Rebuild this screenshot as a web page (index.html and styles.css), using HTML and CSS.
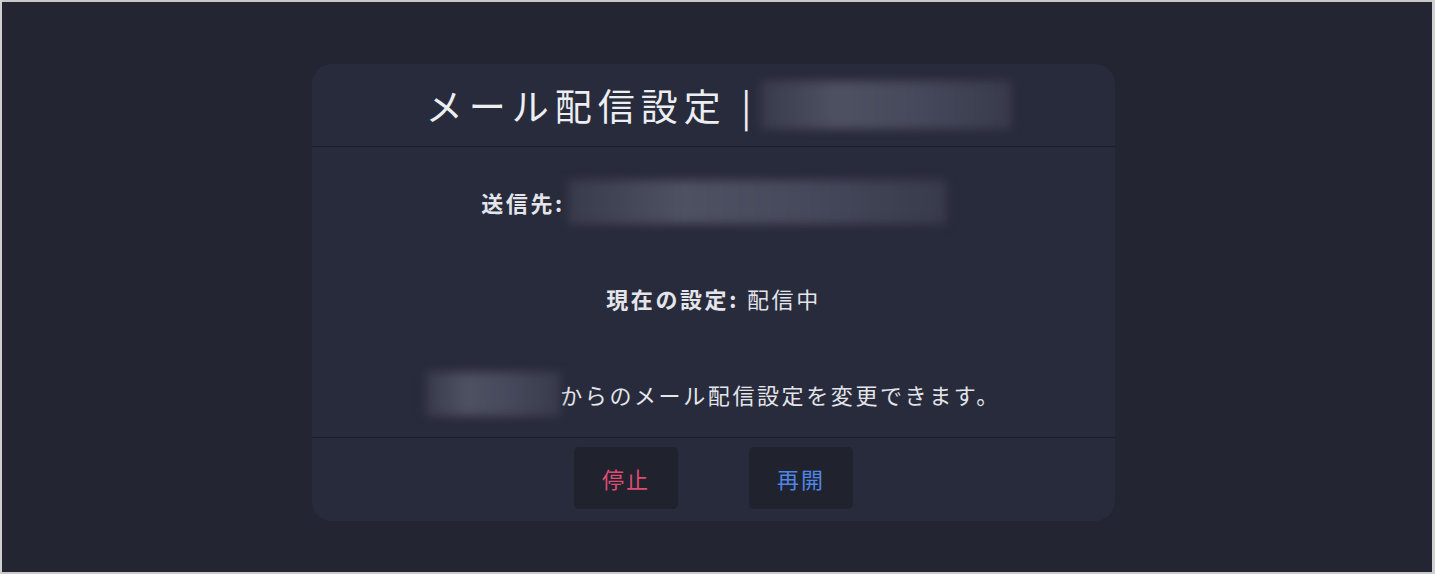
FILE: index.html
```html
<!DOCTYPE html>
<html lang="ja">
<head>
    <meta charset="UTF-8">
    <meta name="viewport" content="width=device-width, initial-scale=1.0">
    <title>メール配信設定</title>
    <link rel="stylesheet" href="styles.css">
</head>
<body>
    <div class="frame">
        <div class="card">
            <div class="card-header">
                <h1>メール配信設定 |</h1>
                <span class="masked masked-title"></span>
            </div>
            <div class="card-body">
                <p class="row"><strong class="tight">送信先:</strong> <span class="masked masked-mail"></span></p>
                <p class="row"><strong>現在の設定:</strong> 配信中</p>
                <p class="row"><span class="masked masked-sender"></span>からのメール配信設定を変更できます。</p>
            </div>
            <div class="card-footer">
                <button class="btn btn-stop">停止</button>
                <button class="btn btn-resume">再開</button>
            </div>
        </div>
    </div>
</body>
</html>
```

FILE: styles.css
```css
html, body {
    margin: 0;
    height: 100%;
}
body {
    font-family: "Noto Sans CJK JP", "Noto Sans", sans-serif;
    background: #d0d0d0;
    color: #e4e5ea;
}
.frame {
    box-sizing: border-box;
    height: 100%;
    margin: 0 3px 0 2px;
    padding-top: 62px;
    border-top: 2px solid #c8c8c8;
    border-bottom: 2px solid #c8c8c8;
    background: #232532;
}
.card {
    width: 803px;
    margin: 0 0 0 310px;
    background: #282b3c;
    border-radius: 20px;
    overflow: hidden;
}
.card-header {
    height: 82px;
    display: flex;
    align-items: center;
    justify-content: center;
    gap: 4px;
    border-bottom: 1px solid #1c1e28;
    padding-left: 10px;
}
.card-header h1 {
    margin: 0;
    font-size: 37px;
    font-weight: 400;
    letter-spacing: 6px;
    color: #eceef2;
}
.masked {
    display: inline-block;
    vertical-align: middle;
    background: linear-gradient(90deg, #383b4c, #4e5162 30%, #474a5c 60%, #383b4c);
    filter: blur(5px);
}
.masked-title {
    width: 250px;
    height: 48px;
}
.card-body {
    display: flex;
    flex-direction: column;
    align-items: center;
    gap: 66px;
    padding: 40px 0 28px;
    border-bottom: 1px solid #1c1e28;
}
.row {
    margin: 0;
    height: 30px;
    line-height: 30px;
    font-size: 22px;
    letter-spacing: 2.6px;
    display: flex;
    align-items: center;
}
.row strong {
    margin-right: 8px;
}
.row strong.tight {
    margin-right: 3px;
}
.masked-mail {
    width: 378px;
    height: 44px;
}
.masked-sender {
    width: 134px;
    height: 44px;
}
.card-footer {
    height: 83px;
    display: flex;
    align-items: center;
    justify-content: center;
    gap: 71px;
    padding-bottom: 4px;
    box-sizing: border-box;
}
.btn {
    width: 104px;
    height: 62px;
    border: none;
    border-radius: 5px;
    background: #20222e;
    font-family: inherit;
    font-size: 22px;
    letter-spacing: 2px;
    cursor: pointer;
}
.btn-stop {
    color: #de4c74;
}
.btn-resume {
    color: #4f86e6;
}
```
